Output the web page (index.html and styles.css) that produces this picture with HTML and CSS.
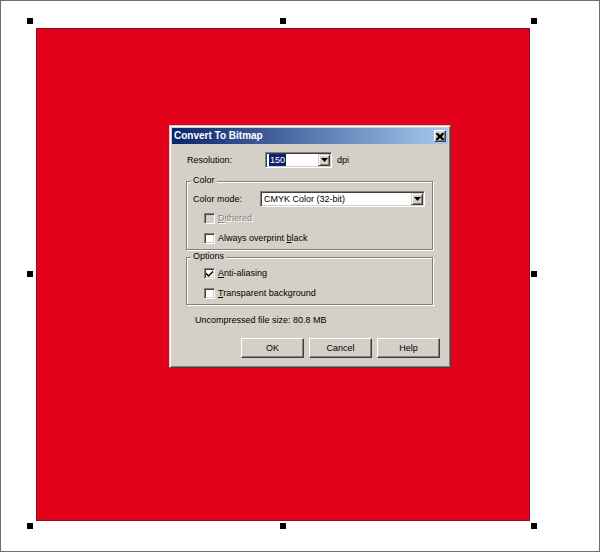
FILE: index.html
```html
<!DOCTYPE html>
<html>
<head>
<meta charset="utf-8">
<title>Convert To Bitmap</title>
<link rel="stylesheet" href="styles.css">
</head>
<body>
<div class="canvas">
  <div class="shape"></div>
  <span class="handle h-tl"></span>
  <span class="handle h-tm"></span>
  <span class="handle h-tr"></span>
  <span class="handle h-ml"></span>
  <span class="handle h-mr"></span>
  <span class="handle h-bl"></span>
  <span class="handle h-bm"></span>
  <span class="handle h-br"></span>

  <div class="dialog">
    <div class="titlebar">
      <span class="title">Convert To Bitmap</span>
      <span class="close"><svg width="8" height="7" viewBox="0 0 8 7"><path d="M0 0h2l2 2 2-2h2v1l-2 2.5 2 2.5v1h-2l-2-2-2 2h-2v-1l2-2.5-2-2.5z" fill="#000"/></svg></span>
    </div>
    <div class="body">
      <div class="res-row">
        <span class="res-lbl">Resolution:</span>
        <div class="combo combo-res">
          <span class="val"><span class="sel">150</span></span>
          <span class="drop"><svg width="7" height="4" viewBox="0 0 7 4"><path d="M0 0h7l-3.5 4z" fill="#000"/></svg></span>
        </div>
        <span class="unit">dpi</span>
      </div>

      <div class="group g-color">
        <span class="legend">Color</span>
        <div class="mode-row">
          <span class="mode-lbl">Color mode:</span>
          <div class="combo combo-mode">
            <span class="val">CMYK Color (32-bit)</span>
            <span class="drop"><svg width="7" height="4" viewBox="0 0 7 4"><path d="M0 0h7l-3.5 4z" fill="#000"/></svg></span>
          </div>
        </div>
        <div class="check check-first disabled"><span class="box"></span><span class="text"><u>D</u>ithered</span></div>
        <div class="check"><span class="box"></span><span class="text">Always overprint <u>b</u>lack</span></div>
      </div>

      <div class="group g-options">
        <span class="legend">Options</span>
        <div class="check check-first"><span class="box"><svg width="7" height="7" viewBox="0 0 7 7"><path d="M0 2.5l2.5 2.5 4.5-4.5v2l-4.5 4.5-2.5-2.5z" fill="#000"/></svg></span><span class="text"><u>A</u>nti-aliasing</span></div>
        <div class="check"><span class="box"></span><span class="text"><u>T</u>ransparent background</span></div>
      </div>

      <div class="filesize">Uncompressed file size: 80.8 MB</div>

      <div class="buttons">
        <span class="btn">OK</span>
        <span class="btn">Cancel</span>
        <span class="btn">Help</span>
      </div>
    </div>
  </div>
</div>
</body>
</html>
```

FILE: styles.css
```css
* { box-sizing: border-box; }

html, body {
  margin: 0;
  padding: 0;
  background: #fff;
}

body {
  font-family: "Liberation Sans", Arial, sans-serif;
  font-size: 9px;
  color: #000;
}

.canvas {
  position: relative;
  width: 600px;
  height: 552px;
  border: 1px solid #6e6e6e;
  background: #fff;
  overflow: hidden;
}

.shape {
  width: 494px;
  height: 493px;
  margin: 27px 0 0 35px;
  background: #e2001a;
  border: 1px solid #8c1020;
}

.handle {
  position: absolute;
  width: 6px;
  height: 6px;
  background: #000;
}
.h-tl { left: 26px; top: 17px; }
.h-tm { left: 279px; top: 17px; }
.h-tr { left: 530px; top: 17px; }
.h-ml { left: 26px; top: 270px; }
.h-mr { left: 530px; top: 270px; }
.h-bl { left: 26px; top: 522px; }
.h-bm { left: 279px; top: 522px; }
.h-br { left: 530px; top: 522px; }

/* dialog window */
.dialog {
  position: absolute;
  left: 168px;
  top: 124px;
  width: 282px;
  height: 243px;
  background: #d4d0c8;
  border: 1px solid;
  border-color: #d4d0c8 #404040 #404040 #d4d0c8;
  box-shadow: inset 1px 1px #fff, inset -1px -1px #808080;
  padding: 2px;
}

.titlebar {
  height: 16px;
  display: flex;
  align-items: center;
  justify-content: space-between;
  padding: 0 2px 0 2px;
  background: linear-gradient(to right, #0a246a, #a6caf0);
}

.title {
  color: #fff;
  font-weight: bold;
  font-size: 10px;
  line-height: 14px;
}

.close {
  width: 12px;
  height: 12px;
  display: flex;
  align-items: center;
  justify-content: center;
  background: #d4d0c8;
  border: 1px solid;
  border-color: #fff #404040 #404040 #fff;
  box-shadow: inset -1px -1px #808080;
}

.body {
  display: flex;
  flex-direction: column;
}

.res-row {
  display: flex;
  align-items: center;
  height: 16px;
  margin-top: 8px;
  padding-left: 15px;
}

.res-lbl {
  width: 78px;
  line-height: 11px;
}

.unit {
  margin-left: 5px;
  line-height: 11px;
}

.combo {
  height: 16px;
  display: flex;
  align-items: center;
  justify-content: space-between;
  background: #fff;
  border: 1px solid;
  border-color: #808080 #fff #fff #808080;
  box-shadow: inset 1px 1px #404040, inset -1px -1px #d4d0c8;
  padding: 1px 1px 1px 2px;
}

.combo-res { width: 67px; }
.combo-mode { width: 165px; }

.val {
  line-height: 11px;
  padding-left: 1px;
}

.sel {
  display: inline-block;
  background: #0a246a;
  color: #fff;
  padding: 0 1px;
  line-height: 12px;
}

.drop {
  width: 12px;
  height: 12px;
  display: flex;
  align-items: center;
  justify-content: center;
  background: #d4d0c8;
  border: 1px solid;
  border-color: #d4d0c8 #404040 #404040 #d4d0c8;
  box-shadow: inset 1px 1px #fff, inset -1px -1px #808080;
}

/* group boxes */
.group {
  position: relative;
  margin-left: 14px;
  width: 247px;
  border: 1px solid #808080;
  box-shadow: inset 1px 1px #fff, 1px 1px #fff;
  padding-left: 6px;
}

.g-color {
  margin-top: 13px;
  height: 69px;
  padding-top: 9px;
}

.g-options {
  margin-top: 7px;
  height: 48px;
  padding-top: 10px;
}

.legend {
  position: absolute;
  top: -7px;
  left: 4px;
  padding: 0 2px;
  line-height: 11px;
  background: #d4d0c8;
}

.mode-row {
  display: flex;
  align-items: center;
  height: 16px;
}

.mode-lbl {
  width: 67px;
  line-height: 11px;
}

.check {
  display: flex;
  align-items: center;
  gap: 3px;
  height: 11px;
  margin-left: 11px;
  margin-top: 9px;
}

.g-color .check-first { margin-top: 6px; }
.g-options .check-first { margin-top: 0; }

.box {
  width: 11px;
  height: 11px;
  display: flex;
  align-items: center;
  justify-content: center;
  background: #fff;
  border: 1px solid;
  border-color: #808080 #fff #fff #808080;
  box-shadow: inset 1px 1px #404040, inset -1px -1px #d4d0c8;
}

.text {
  line-height: 11px;
}

.disabled .box {
  background: #d4d0c8;
}

.disabled .text {
  color: #808080;
  text-shadow: 1px 1px #fff;
}

.filesize {
  margin-top: 10px;
  padding-left: 23px;
  line-height: 11px;
}

.buttons {
  display: flex;
  justify-content: flex-end;
  gap: 5px;
  margin-top: 12px;
  padding-right: 8px;
}

.btn {
  width: 63px;
  height: 20px;
  display: flex;
  align-items: center;
  justify-content: center;
  background: #d4d0c8;
  border: 1px solid;
  border-color: #fff #404040 #404040 #fff;
  box-shadow: inset -1px -1px #808080, inset 1px 1px #d4d0c8;
  line-height: 11px;
}
```
